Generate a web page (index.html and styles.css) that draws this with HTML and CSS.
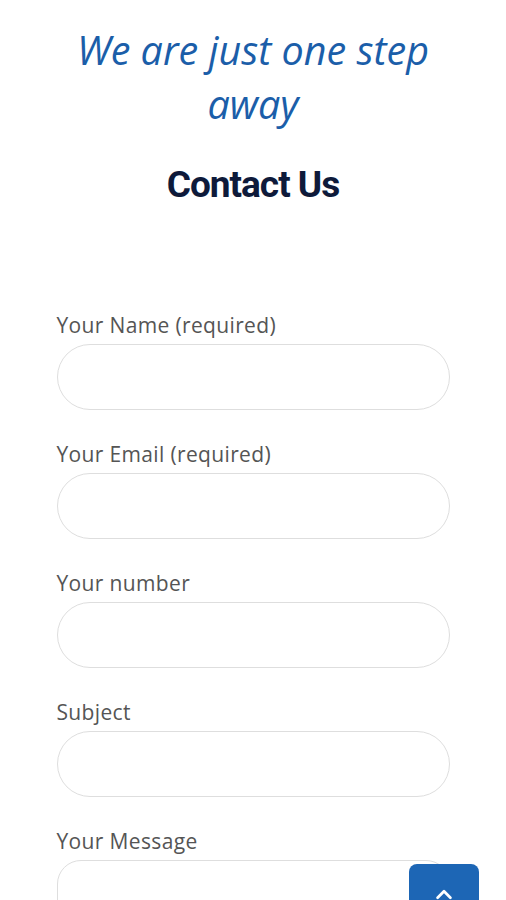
FILE: index.html
```html
<!DOCTYPE html>
<html lang="en">
<head>
    <meta charset="UTF-8">
    <meta name="viewport" content="width=device-width, initial-scale=1.0">
    <title>Contact Us</title>
    <link rel="stylesheet" href="styles.css">
</head>
<body>
    <div class="container">
        <h1 class="tagline">We are just one step away</h1>
        <h2 class="title">Contact Us</h2>

        <form class="contact-form">
            <div class="field">
                <label for="name">Your Name (required)</label>
                <input type="text" id="name">
            </div>
            <div class="field">
                <label for="email">Your Email (required)</label>
                <input type="email" id="email">
            </div>
            <div class="field">
                <label for="number">Your number</label>
                <input type="text" id="number">
            </div>
            <div class="field">
                <label for="subject">Subject</label>
                <input type="text" id="subject">
            </div>
            <div class="field">
                <label for="message">Your Message</label>
                <textarea id="message" rows="6"></textarea>
            </div>
        </form>
    </div>

    <a href="#" class="to-top" aria-label="Back to top">
        <svg width="22" height="22" viewBox="0 0 24 24" fill="none" stroke="#fff" stroke-width="3" stroke-linecap="round" stroke-linejoin="round">
            <polyline points="5 15 12 8 19 15"></polyline>
        </svg>
    </a>
</body>
</html>
```

FILE: styles.css
```css
* {
    margin: 0;
    padding: 0;
    box-sizing: border-box;
}

body {
    font-family: 'Open Sans', 'Noto Sans', sans-serif;
    background-color: #fff;
    overflow: hidden;
}

.container {
    width: 393px;
    margin: 0 auto;
    padding-top: 23px;
    text-align: center;
}

.tagline {
    font-family: 'Open Sans', sans-serif;
    font-style: italic;
    font-weight: 400;
    font-size: 39.5px;
    line-height: 54px;
    color: #1b5ea9;
    margin: 0 -20px;
}

.title {
    font-family: Roboto, sans-serif;
    font-weight: 700;
    font-size: 37px;
    line-height: 44px;
    color: #0e1a3a;
    letter-spacing: -1px;
    margin-top: 32px;
}

.contact-form {
    margin-top: 104px;
    text-align: left;
}

.field {
    margin-bottom: 30px;
}

.field label {
    display: block;
    font-size: 21px;
    letter-spacing: 0.35px;
    line-height: 28px;
    color: #555;
    margin-bottom: 5px;
}

.field input {
    display: block;
    width: 100%;
    height: 66px;
    border: 1px solid #dedede;
    border-radius: 33px;
    padding: 0 24px;
    font-size: 18px;
    background-color: #fff;
}

.field textarea {
    display: block;
    width: 100%;
    height: 160px;
    border: 1px solid #dedede;
    border-radius: 24px;
    padding: 16px 24px;
    font-size: 18px;
    resize: none;
}

.to-top {
    position: fixed;
    left: 409px;
    top: 864px;
    width: 70px;
    height: 70px;
    background-color: #1d66b5;
    border-radius: 8px;
    display: flex;
    justify-content: center;
    padding-top: 20px;
}
```
